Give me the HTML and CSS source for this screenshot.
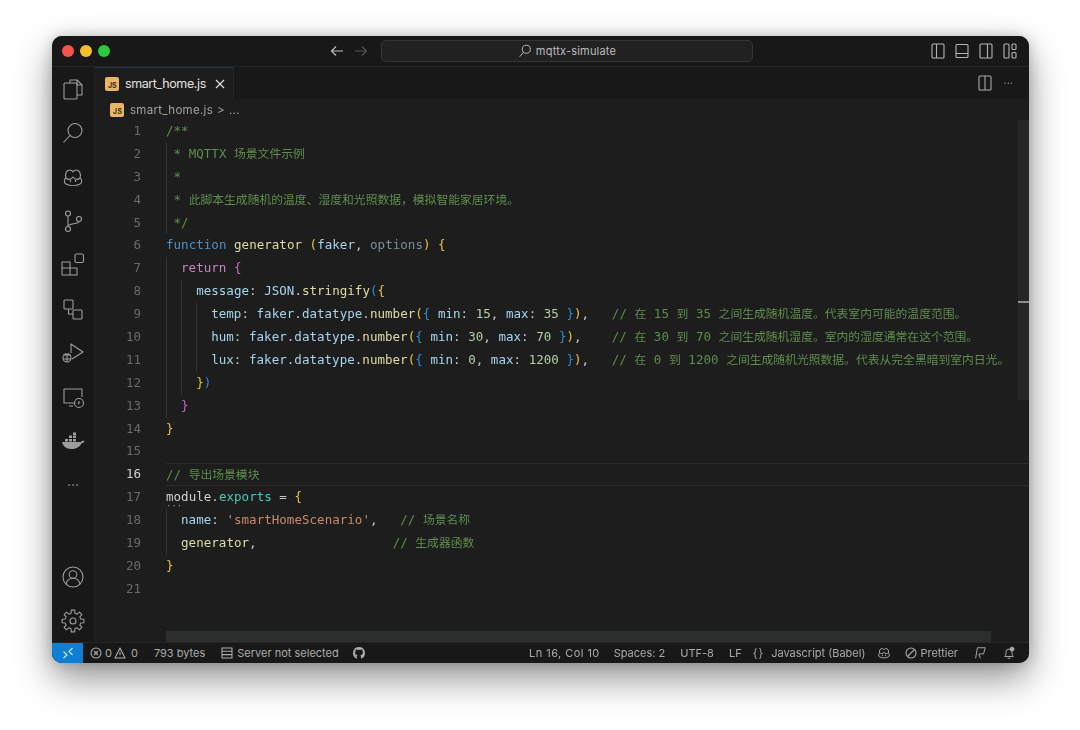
FILE: index.html
```html
<!DOCTYPE html>
<html lang="zh">
<head>
  <meta charset="UTF-8" />
  <title>smart_home.js - mqttx-simulate</title>
  <link rel="stylesheet" href="styles.css">
</head>
<body>
  <div class="window">
    <header class="titlebar">
      <div class="lights"><span class="light red"></span><span class="light yellow"></span><span class="light green"></span></div>
      <div class="history">
        <svg class="ic16" viewBox="0 0 16 16"><path d="M14 8H2.500M7 3.500 2.500 8 7 12.500"/></svg>
        <svg class="ic16 dim" viewBox="0 0 16 16"><path d="M2 8h11.500M9 3.500 13.500 8 9 12.500"/></svg>
      </div>
      <div class="searchbox">
        <svg class="ic14" viewBox="0 0 16 16"><circle cx="9.500" cy="6" r="4.600"/><path d="M6.200 9.500 2 14.500"/></svg>
        <span>mqttx-simulate</span>
      </div>
      <div class="layout-btns">
        <svg class="ic16" viewBox="0 0 16 16"><rect x="2" y="1" width="12" height="14" rx="1"/><path d="M6.500 1v14"/></svg>
        <svg class="ic16" viewBox="0 0 16 16"><rect x="2" y="1.500" width="12" height="13" rx="1"/><path d="M2 10.500h12"/></svg>
        <svg class="ic16" viewBox="0 0 16 16"><rect x="2" y="1" width="12" height="14" rx="1"/><path d="M9.500 1v14"/></svg>
        <svg class="ic16" viewBox="0 0 16 16"><rect x="2" y="1" width="5" height="14" rx="1"/><rect x="10" y="1" width="4" height="5.500" rx="1"/><rect x="10" y="9.500" width="4" height="5.500" rx="1"/></svg>
      </div>
    </header>

    <div class="workbench">
      <nav class="activity">
        <div class="activity-group">
          <svg class="ic24" viewBox="0 0 24 24"><path d="M9 6V3h7l5 5v10h-5"/><path d="M16 3v5h5"/><rect x="3" y="6" width="13" height="16" rx="1"/></svg>
          <svg class="ic24" viewBox="0 0 24 24"><circle cx="14" cy="9.500" r="7"/><path d="M9 14.500 2.500 21.500"/></svg>
          <svg class="ic24" viewBox="0 0 24 24"><path d="M5 13c-2 1-2.500 5 0 6 4 2 10 2 14 0 2.500-1 2-5 0-6"/><path d="M5 13c-1.500-5 1-8 4-8 1.500 0 2.500 1 3 2 .5-1 1.500-2 3-2 3 0 5.500 3 4 8-2 2-5 2-7-1-2 3-5 3-7 1z"/><path d="M9.500 15v2M14.500 15v2"/></svg>
          <svg class="ic24" viewBox="0 0 24 24"><circle cx="7" cy="4.500" r="2.500"/><circle cx="7" cy="20" r="2.500"/><circle cx="18" cy="10" r="2.500"/><path d="M7 7v10.500M18 12.500c0 3-11 1.500-11 5"/></svg>
          <svg class="ic24" viewBox="0 0 24 24"><path d="M1 9h8v6h7v7H1zM1 15h8v7"/><rect x="14" y="1" width="8.500" height="8.500" rx="1.500"/></svg>
          <svg class="ic24" viewBox="0 0 24 24"><rect x="3" y="3" width="9" height="9" rx="1"/><rect x="12" y="13" width="9" height="9" rx="1"/><path d="M7.500 12v5H12"/></svg>
          <svg class="ic24" viewBox="0 0 24 24"><path d="M10 12V3l12 8-11 7"/><circle cx="6" cy="17" r="4"/><path d="M2 14h8M2 18h8M6 13v8M4 12.500l1 1M8 12.500l-1 1"/></svg>
          <svg class="ic24" viewBox="0 0 24 24"><path d="M13 18H3V4h18v8M8 21h4"/><circle cx="18" cy="18" r="4.500"/><path d="M18 16v2l-1 1"/></svg>
          <svg class="ic24 solid" viewBox="0 0 24 24"><path d="M1 13h19c.8-1.200 2.200-1.500 3.500-1-.7 1.500-1.800 2.200-3 2.200C19 18 15 20 10 20c-5 0-8-3-9-7z"/><path d="M4 10h3v2.500H4zM8 10h3v2.500H8zM12 10h3v2.500h-3zM8 6.500h3V9H8zM12 6.500h3V9h-3zM12 3.500h3V6h-3z"/></svg>
          <span class="more">···</span>
        </div>
        <div class="activity-group bottom">
          <svg class="ic24" viewBox="0 0 24 24"><circle cx="12" cy="12" r="10"/><circle cx="12" cy="9.500" r="3.800"/><path d="M5 19c1-4 4-5.700 7-5.700s6 1.700 7 5.700"/></svg>
          <svg class="ic24" viewBox="0 0 24 24"><path d="M19.760 10.060 22.860 10.280V13.720L19.760 13.940 18.860 16.120 20.900 18.470 18.470 20.900 16.120 18.860 13.940 19.760 13.720 22.860H10.280L10.060 19.760 7.880 18.860 5.530 20.900 3.100 18.470 5.140 16.120 4.240 13.940 1.140 13.720V10.280L4.240 10.060 5.140 7.880 3.100 5.530 5.530 3.100 7.880 5.140 10.060 4.240 10.280 1.140H13.720L13.940 4.240 16.120 5.140 18.470 3.100 20.900 5.530 18.860 7.880z"/><circle cx="12" cy="12" r="3"/></svg>
        </div>
      </nav>

      <main class="editor">
        <div class="tabs">
          <div class="tab">
            <span class="js-icon">JS</span>
            <span class="tab-name">smart_home.js</span>
            <svg class="ic12" viewBox="0 0 12 12"><path d="M2 2l8 8M10 2l-8 8"/></svg>
          </div>
          <div class="tab-actions">
            <svg class="ic16" viewBox="0 0 16 16"><rect x="2" y="1" width="12" height="14" rx="1"/><path d="M8 1v14"/></svg>
            <span class="more small">···</span>
          </div>
        </div>
        <div class="breadcrumb"><span class="js-icon">JS</span><span>smart_home.js</span><span class="crumb-sep">&gt;</span><span>...</span></div>

        <div class="code">
          <div class="line"><span class="num">1</span><span class="src cm">/**</span></div>
          <div class="line"><span class="num">2</span><span class="src cm"><i class="g s"></i> * MQTTX <b>场景文件示例</b></span></div>
          <div class="line"><span class="num">3</span><span class="src cm"><i class="g s"></i> *</span></div>
          <div class="line"><span class="num">4</span><span class="src cm"><i class="g s"></i> * <b>此脚本生成随机的温度、湿度和光照数据，模拟智能家居环境。</b></span></div>
          <div class="line"><span class="num">5</span><span class="src cm"><i class="g s"></i> */</span></div>
          <div class="line"><span class="num">6</span><span class="src"><span class="kw">function</span> <span class="fn">generator</span> <span class="br1">(</span><span class="var">faker</span>, <span class="dimvar">options</span><span class="br1">)</span> <span class="br1">{</span></span></div>
          <div class="line"><span class="num">7</span><span class="src"><i class="g"></i><span class="ctl">return</span> <span class="br2">{</span></span></div>
          <div class="line"><span class="num">8</span><span class="src"><i class="g"></i><i class="g"></i><span class="var">message</span>: <span class="var">JSON</span>.<span class="fn">stringify</span><span class="br3">(</span><span class="br1">{</span></span></div>
          <div class="line"><span class="num">9</span><span class="src"><i class="g"></i><i class="g"></i><i class="g"></i><span class="var">temp</span>: <span class="var">faker</span>.<span class="var">datatype</span>.<span class="fn">number</span><span class="br1">(</span><span class="br3">{</span> <span class="var">min</span>: <span class="nm">15</span>, <span class="var">max</span>: <span class="nm">35</span> <span class="br3">}</span><span class="br1">)</span>,   <span class="cm">// <b>在</b> 15 <b>到</b> 35 <b>之间生成随机温度。代表室内可能的温度范围。</b></span></span></div>
          <div class="line"><span class="num">10</span><span class="src"><i class="g"></i><i class="g"></i><i class="g"></i><span class="var">hum</span>: <span class="var">faker</span>.<span class="var">datatype</span>.<span class="fn">number</span><span class="br1">(</span><span class="br3">{</span> <span class="var">min</span>: <span class="nm">30</span>, <span class="var">max</span>: <span class="nm">70</span> <span class="br3">}</span><span class="br1">)</span>,    <span class="cm">// <b>在</b> 30 <b>到</b> 70 <b>之间生成随机湿度。室内的湿度通常在这个范围。</b></span></span></div>
          <div class="line"><span class="num">11</span><span class="src"><i class="g"></i><i class="g"></i><i class="g"></i><span class="var">lux</span>: <span class="var">faker</span>.<span class="var">datatype</span>.<span class="fn">number</span><span class="br1">(</span><span class="br3">{</span> <span class="var">min</span>: <span class="nm">0</span>, <span class="var">max</span>: <span class="nm">1200</span> <span class="br3">}</span><span class="br1">)</span>,   <span class="cm">// <b>在</b> 0 <b>到</b> 1200 <b>之间生成随机光照数据。代表从完全黑暗到室内日光。</b></span></span></div>
          <div class="line"><span class="num">12</span><span class="src"><i class="g"></i><i class="g"></i><span class="br1">}</span><span class="br3">)</span></span></div>
          <div class="line"><span class="num">13</span><span class="src"><i class="g"></i><span class="br2">}</span></span></div>
          <div class="line"><span class="num">14</span><span class="src"><span class="br1">}</span></span></div>
          <div class="line"><span class="num">15</span><span class="src"></span></div>
          <div class="line active"><span class="num">16</span><span class="src cm">// <b>导出场景模块</b></span></div>
          <div class="line"><span class="num">17</span><span class="src"><span class="hint">module</span>.<span class="type">exports</span> = <span class="br1">{</span></span></div>
          <div class="line"><span class="num">18</span><span class="src"><i class="g"></i><span class="var">name</span>: <span class="str">'smartHomeScenario'</span>,   <span class="cm">// <b>场景名称</b></span></span></div>
          <div class="line"><span class="num">19</span><span class="src"><i class="g"></i><span class="fn">generator</span>,                  <span class="cm">// <b>生成器函数</b></span></span></div>
          <div class="line"><span class="num">20</span><span class="src"><span class="br1">}</span></span></div>
          <div class="line"><span class="num">21</span><span class="src"></span></div>
          <div class="vscroll"><div class="vscroll-mark"></div></div>
          <div class="hscroll"></div>
        </div>
      </main>
    </div>

    <footer class="statusbar">
      <div class="remote"><svg class="ic12" viewBox="0 0 12 12"><path d="M1.500 4.500 5 8 1.500 11M10.500 1 7 4.500 10.500 8"/></svg></div>
      <div class="status-left">
        <span class="item tight"><svg class="ic12" viewBox="0 0 12 12"><circle cx="6" cy="6" r="5"/><path d="M4 4l4 4M8 4l-4 4"/></svg>0</span>
        <span class="item tight"><svg class="ic12" viewBox="0 0 12 12"><path d="M6 1l5 10H1z"/><path d="M6 5v3"/></svg>0</span>
        <span class="item bytes">793 bytes</span>
        <span class="item server"><svg class="ic12" viewBox="0 0 12 12"><rect x="1" y="1" width="10" height="10"/><path d="M1 4.300h10M1 7.600h10"/></svg>Server not selected</span>
        <span class="item"><svg class="ic14 solid" viewBox="0 0 16 16"><path d="M8 1a7 7 0 0 0-2.200 13.600V12c-1.500.3-2-.5-2.300-1.200 1 .4 1.500 1 2.300.7.1-.5.300-.8.600-1-2-.3-2.900-1.200-2.900-3 0-.8.300-1.400.7-1.900-.1-.4-.2-1 .1-1.800.8 0 1.400.4 1.900.8a6 6 0 0 1 3.600 0c.5-.4 1.100-.8 1.900-.8.300.8.200 1.400.1 1.800.4.500.7 1.100.7 1.900 0 1.800-.9 2.700-2.900 3 .4.300.6.800.6 1.400v2.700A7 7 0 0 0 8 1z"/></svg></span>
      </div>
      <div class="status-right">
        <span class="item pos">Ln 16, Col 10</span>
        <span class="item">Spaces: 2</span>
        <span class="item">UTF-8</span>
        <span class="item">LF</span>
        <span class="item lang"><span class="braces">{ }</span>Javascript (Babel)</span>
        <span class="item copilot"><svg class="ic14" viewBox="0 0 16 16"><path d="M3 8c-1.500 1-1.500 3.500 0 4.500 3 1.500 7 1.500 10 0 1.500-1 1.500-3.500 0-4.500"/><path d="M3 8C2 4.500 4 3 6 3c1 0 1.700.5 2 1.200C8.300 3.500 9 3 10 3c2 0 4 1.500 3 5-1.500 1-3.500 1-5-.8C6.500 9 4.500 9 3 8z"/><path d="M6.300 10v1.500M9.700 10v1.500"/></svg></span>
        <span class="item"><svg class="ic12" viewBox="0 0 12 12"><circle cx="6" cy="6" r="5"/><path d="M2.500 9.500l7-7"/></svg>Prettier</span>
        <span class="item"><svg class="ic14" viewBox="0 0 16 16"><path d="M5 2h9l-2 7H7M5 2 3 14M6.500 9l2 5"/></svg></span>
        <span class="item"><svg class="ic14" viewBox="0 0 16 16"><path d="M3 12h10c-1.500-1-1.500-2.500-1.500-5A3.500 3.500 0 0 0 8 3.500 3.500 3.500 0 0 0 4.500 7c0 2.500 0 4-1.500 5zM6.500 14h3"/><circle class="fill" cx="11.500" cy="3.500" r="2.200"/></svg></span>
      </div>
    </footer>
  </div>
</body>
</html>
```

FILE: styles.css
```css
body {
  margin: 0;
  padding: 36px 51px 0 52px;
  background: #fff;
  overflow: hidden;
  font-family: Inter, 'Noto Sans', sans-serif;
  color: #b4b4b4;
}

svg {
  fill: none;
  stroke: currentColor;
  stroke-width: 1.1;
  stroke-linejoin: round;
  flex: none;
}

svg.solid {
  fill: currentColor;
  stroke: none;
}

svg .fill {
  fill: currentColor;
}

.ic12 { width: 12px; height: 12px; }
.ic14 { width: 14px; height: 14px; }
.ic16 { width: 16px; height: 16px; }
.ic24 { width: 24px; height: 24px; color: #9d9d9d; }
.ic16.dim { color: #555; }

.window {
  height: 627px;
  display: flex;
  flex-direction: column;
  border-radius: 10px;
  overflow: hidden;
  background: #181818;
  filter: blur(0.5px);
}

/* shadow sits on its own layer so the clip above does not cut it */
body::before {
  content: "";
  position: absolute;
  left: 52px;
  top: 36px;
  width: 977px;
  height: 627px;
  border-radius: 10px;
  box-shadow: 0 16px 36px rgba(0, 0, 0, 0.42), 0 0 14px rgba(0, 0, 0, 0.18);
}

.window > * {
  position: relative;
}

/* title bar */
.titlebar {
  height: 31px;
  flex: none;
  display: flex;
  align-items: center;
  padding: 0 11px 0 10px;
  background: #181818;
  border-bottom: 1px solid #252525;
  box-sizing: border-box;
}

.lights {
  display: flex;
  gap: 6px;
  width: 267px;
}

.light {
  width: 12px;
  height: 12px;
  border-radius: 50%;
}

.red { background: #f5544d; }
.yellow { background: #f7bd2e; }
.green { background: #2cc840; }

.history {
  display: flex;
  gap: 8px;
  width: 52px;
  color: #bbb;
}

.searchbox {
  width: 372px;
  height: 22px;
  display: flex;
  align-items: center;
  justify-content: center;
  gap: 4px;
  box-sizing: border-box;
  border: 1px solid #353535;
  border-radius: 5px;
  background: #212121;
  font-size: 11px;
  letter-spacing: 0.2px;
  color: #bdbdbd;
}

.layout-btns {
  margin-left: auto;
  display: flex;
  gap: 8px;
}

/* activity bar */
.workbench {
  flex: 1;
  min-height: 0;
  display: flex;
}

.activity {
  width: 43px;
  flex: none;
  display: flex;
  flex-direction: column;
  justify-content: space-between;
  align-items: center;
  padding: 10px 0 9px;
  box-sizing: border-box;
  background: #181818;
  border-right: 1px solid #222;
}

.activity-group {
  display: flex;
  flex-direction: column;
  align-items: center;
  gap: 20px;
}

.more {
  height: 24px;
  line-height: 24px;
  font-size: 14px;
  color: #8a8a8a;
}

.more.small {
  height: 16px;
  line-height: 16px;
  font-size: 11px;
}

/* editor */
.editor {
  flex: 1;
  min-width: 0;
  display: flex;
  flex-direction: column;
  background: #1d1d1d;
}

.tabs {
  height: 32px;
  flex: none;
  display: flex;
  justify-content: space-between;
  background: #181818;
}

.tab {
  width: 139px;
  display: flex;
  align-items: center;
  padding-left: 10px;
  box-sizing: border-box;
  background: #1d1d1d;
  border-top: 1px solid #1f3242;
  border-right: 1px solid #262626;
  color: #e2e2e2;
}

.tab-name {
  margin: 0 8px 0 6px;
  font-size: 12.5px;
  letter-spacing: -0.4px;
}

.tab-actions {
  display: flex;
  align-items: center;
  gap: 10px;
  padding-right: 16px;
  color: #aaa;
}

.js-icon {
  width: 14px;
  height: 14px;
  flex: none;
  box-sizing: border-box;
  padding: 5px 0 0 3px;
  border-radius: 2px;
  background: #e9b566;
  color: #3a2d14;
  font-size: 7px;
  line-height: 8px;
  font-weight: 700;
}

.breadcrumb {
  height: 21px;
  flex: none;
  display: flex;
  align-items: center;
  gap: 6px;
  padding-left: 15px;
  font-size: 11.5px;
  letter-spacing: 0.3px;
  color: #a3a3a3;
}

.breadcrumb .crumb-sep {
  margin-left: -2px;
  margin-right: -2px;
}

.code {
  position: relative;
  flex: 1;
  min-height: 0;
  font-family: 'DejaVu Sans Mono', 'Noto Sans CJK SC', monospace;
  font-size: 12.5px;
  letter-spacing: 0.03px;
  line-height: 22.9px;
  color: #c8c8c8;
}

.line {
  height: 22.9px;
  display: flex;
  white-space: pre;
}

.num {
  width: 46px;
  flex: none;
  text-align: right;
  color: #676b6b;
}

.src {
  flex: 1;
  margin-left: 25px;
}

.active .src {
  box-sizing: border-box;
  height: 22.9px;
  border-top: 1px solid #2a2a2a;
  border-bottom: 1px solid #2a2a2a;
  line-height: 21px;
}

.active .num {
  color: #cfcfcf;
}

.g {
  display: inline-block;
  width: 15.07px;
  height: 22.9px;
  box-sizing: border-box;
  border-left: 1px solid #343434;
  vertical-align: top;
}

.g.s {
  width: 1px;
  margin-right: -1px;
}

.cm { color: #5f8d4e; }

/* line-height 1 keeps the CJK font from pushing the baseline down */
.cm b {
  font-family: 'Noto Sans CJK SC', sans-serif;
  font-size: 11.8px;
  font-weight: 400;
  letter-spacing: 0;
  line-height: 1;
}

.kw { color: #4f8fc7; }
.ctl { color: #c586c0; }
.fn { color: #dcdcaa; }
.var { color: #a6d5ec; }
.dimvar { color: #7b8f98; }
.nm { color: #b5cea8; }
.str { color: #c98a6c; }
.type { color: #4ec9b0; }
.br1 { color: #e8c83a; }
.br2 { color: #c56cc0; }
.br3 { color: #2b8fd6; }

.hint {
  position: relative;
  color: #d0d0d0;
}

.hint::after {
  content: "···";
  position: absolute;
  left: 0;
  top: 6px;
  font-size: 9px;
  letter-spacing: 0;
  color: #999;
}

.vscroll {
  position: absolute;
  top: 0;
  right: 0;
  width: 12px;
  height: 280px;
  background: #262626;
  border-left: 1px solid #202020;
  box-sizing: border-box;
}

.vscroll-mark {
  height: 2px;
  margin-top: 181px;
  background: #8e8e8e;
}

.hscroll {
  position: absolute;
  left: 71px;
  bottom: 0;
  width: 825px;
  height: 11px;
  background: #2c2e2e;
}

/* status bar */
.statusbar {
  height: 21px;
  flex: none;
  display: flex;
  align-items: center;
  background: #181818;
  border-top: 1px solid #262626;
  box-sizing: border-box;
  font-size: 11px;
  color: #ababab;
}

.remote {
  width: 31px;
  height: 100%;
  display: flex;
  align-items: center;
  justify-content: center;
  background: #0f7fd6;
  color: #cfe6f8;
}

.status-left,
.status-right {
  display: flex;
  align-items: center;
}

.status-left {
  padding-left: 7px;
  gap: 13px;
}

.status-left .tight {
  gap: 3px;
  margin-right: -11px;
}

.status-left .tight + .tight {
  gap: 5px;
}

.status-left .bytes {
  margin-left: 14px;
}

.status-left .server {
  margin-left: 3px;
  gap: 4px;
}

.status-right {
  margin-left: auto;
  gap: 15px;
  padding-right: 13px;
}

.item {
  display: flex;
  align-items: center;
  gap: 3px;
  white-space: nowrap;
}

.status-right .pos {
  letter-spacing: 0.45px;
  margin-right: -1px;
}

.status-right .lang {
  margin-left: -4px;
}

.status-right .copilot {
  margin-left: -3px;
  margin-right: -1px;
}

.braces {
  margin-right: 6px;
  letter-spacing: -1px;
}
```
